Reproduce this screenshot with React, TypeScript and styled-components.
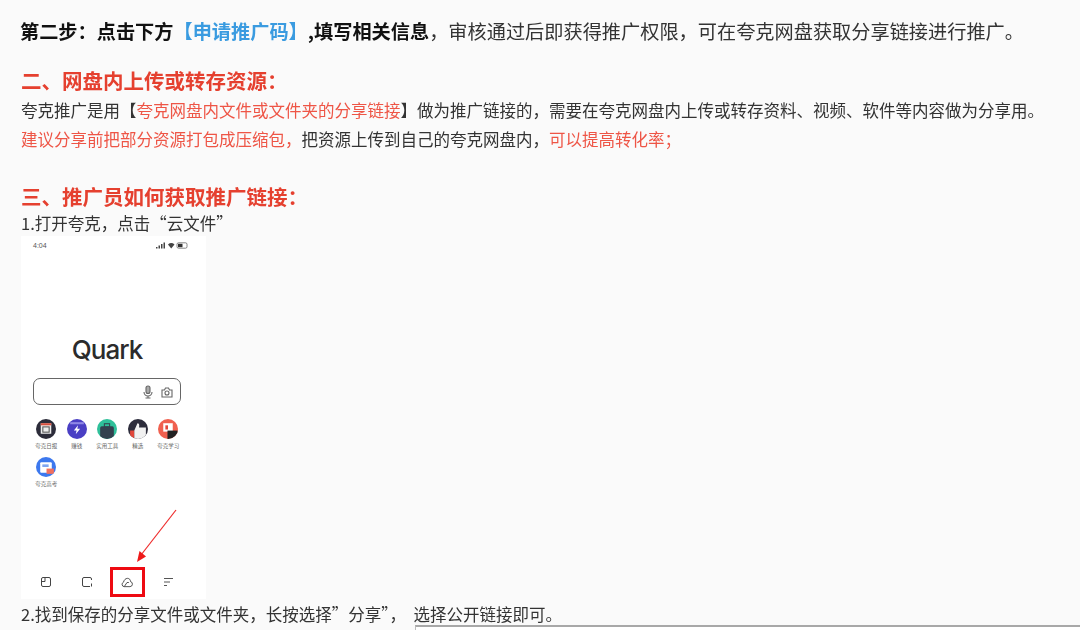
import React from "react";
import styled, { createGlobalStyle } from "styled-components";

const GlobalStyle = createGlobalStyle`
  html, body {
    margin: 0;
    height: 100%;
    overflow: hidden;
    background: #fafafa;
  }
  body {
    font-family: "Noto Sans CJK SC", "Liberation Sans", sans-serif;
  }
`;

const Page = styled.div`
  padding: 16px 0 0 21px;
  color: #333;
  filter: blur(0.25px);
`;

const Lead = styled.p`
  margin: 0 0 19px -1px;
  font-size: 19.2px;
  line-height: 30px;
  white-space: nowrap;
`;

const Strong = styled.b`
  font-weight: 700;
  color: #111;
`;

const Blue = styled.b`
  font-weight: 700;
  color: #3a9be0;
`;

const Heading = styled.h2<{ $top?: number; $lh: number }>`
  margin: ${(p) => p.$top ?? 0}px 0 0;
  font-size: 20.5px;
  line-height: ${(p) => p.$lh}px;
  font-weight: 700;
  color: #e5402f;
  white-space: nowrap;
`;

const Body = styled.p`
  margin: 0;
  font-size: 16.5px;
  line-height: 29px;
  white-space: nowrap;
`;

const Red = styled.span`
  color: #ee5546;
`;

const Step = styled.p`
  margin: 0;
  font-size: 16.5px;
  line-height: 24px;
  white-space: pre;
`;

const Phone = styled.div`
  position: relative;
  margin: 1px 0 3px;
  width: 185px;
  height: 363px;
  box-sizing: border-box;
  padding: 5px 25px 0 12px;
  background: #fff;
  display: flex;
  flex-direction: column;
`;

const StatusBar = styled.div`
  display: flex;
  align-items: center;
  justify-content: space-between;
  height: 9px;
  margin-right: -7px;
  font: 7px "Liberation Sans", sans-serif;
  color: #555;
`;

const Logo = styled.div`
  margin-top: 83px;
  text-align: center;
  font: 500 26px/34px "Inter", "Liberation Sans", sans-serif;
  letter-spacing: -1px;
  color: #2b2b2b;
`;

const SearchBox = styled.div`
  margin-top: 11px;
  height: 27px;
  box-sizing: border-box;
  border: 1px solid #666;
  border-radius: 7px;
  display: flex;
  align-items: center;
  justify-content: flex-end;
  gap: 7px;
  padding-right: 7px;
`;

const AppGrid = styled.div`
  margin: 14px 0 0 -2px;
  display: grid;
  grid-template-columns: repeat(5, 30.5px);
  row-gap: 7px;
`;

const AppItem = styled.div`
  display: flex;
  flex-direction: column;
  align-items: center;
`;

const AppIcon = styled.div<{ $bg: string }>`
  width: 20px;
  height: 20px;
  border-radius: 50%;
  background: ${(p) => p.$bg};
  overflow: hidden;
  display: flex;
  align-items: center;
  justify-content: center;
`;

const AppLabel = styled.span`
  margin-top: 3px;
  font-size: 5.5px;
  line-height: 8px;
  color: #666;
  white-space: nowrap;
`;

const NavBar = styled.div`
  margin: auto 7px 0;
  height: 34px;
  display: flex;
  align-items: center;
  justify-content: space-between;
`;

const NavSlot = styled.div`
  width: 12px;
  height: 12px;
  display: flex;
  align-items: center;
  justify-content: center;
`;

const Highlight = styled.div`
  position: absolute;
  left: 89px;
  top: 331px;
  width: 35px;
  height: 30px;
  box-sizing: border-box;
  border: 3px solid #ee0a12;
`;

const Arrow = styled.svg`
  position: absolute;
  left: 105px;
  top: 273px;
`;

const NextImage = styled.div`
  margin: -1px 0 0 394px;
  height: 20px;
  border-top: 2px solid #a8a8a8;
  border-left: 1px solid #bbb;
  background: #fff;
`;

const apps = [
  {
    label: "夸克日报",
    bg: "#2c2c3a",
    art: (
      <svg width="20" height="20" viewBox="0 0 19 19">
        <rect x="4.500" y="4" width="10" height="10" fill="#eee" />
        <rect x="4.500" y="4" width="10" height="2" fill="#d8503f" />
        <rect x="6.500" y="7.500" width="6" height="5" fill="none" stroke="#555" />
      </svg>
    ),
  },
  {
    label: "赚钱",
    bg: "#4a3fc4",
    art: (
      <svg width="20" height="20" viewBox="0 0 19 19">
        <rect x="3" y="3" width="13" height="2" fill="#8f88e6" />
        <path d="M10.500 6 6.500 11h2.600l-.8 3.500 4.200-5.200H9.800z" fill="#fff" />
      </svg>
    ),
  },
  {
    label: "实用工具",
    bg: "#2fc09a",
    art: (
      <svg width="20" height="20" viewBox="0 0 19 19">
        <rect x="3" y="7" width="13" height="12" rx="1.500" fill="#33414f" />
        <rect x="7" y="4.500" width="5" height="3" fill="none" stroke="#33414f" />
      </svg>
    ),
  },
  {
    label: "精选",
    bg: "#2d2d3c",
    art: (
      <svg width="20" height="20" viewBox="0 0 19 19">
        <path d="M2 11h4v8H2z" fill="#e2473b" />
        <path d="M6 11l3-7c1.500 0 2 1 1.500 4H17v7l-2 4H6z" fill="#f1f1f1" />
      </svg>
    ),
  },
  {
    label: "夸克学习",
    bg: "#f0604f",
    art: (
      <svg width="20" height="20" viewBox="0 0 19 19">
        <rect x="5" y="4" width="9" height="8" fill="#fff" />
        <rect x="9" y="11" width="10" height="8" fill="#222" />
        <rect x="7" y="6" width="2.500" height="4" fill="#e2473b" />
      </svg>
    ),
  },
  {
    label: "夸克高考",
    bg: "#3c78ee",
    art: (
      <svg width="20" height="20" viewBox="0 0 19 19">
        <rect x="4" y="5" width="11" height="10" rx="1" fill="#fff" />
        <rect x="6" y="7" width="6" height="2.500" fill="#7fa6f0" />
        <rect x="10" y="11" width="7" height="5" fill="#f0705f" />
      </svg>
    ),
  },
];

const App: React.FC = () => {
  return (
    <>
      <GlobalStyle />
      <Page>
        <Lead>
          <Strong>第二步：点击下方</Strong>
          <Blue>【申请推广码】</Blue>
          <Strong>,填写相关信息</Strong>，审核通过后即获得推广权限，可在夸克网盘获取分享链接进行推广。
        </Lead>

        <Heading $lh={31}>二、网盘内上传或转存资源：</Heading>
        <Body>
          夸克推广是用【<Red>夸克网盘内文件或文件夹的分享链接</Red>】做为推广链接的，需要在夸克网盘内上传或转存资料、视频、软件等内容做为分享用。
        </Body>
        <Body>
          <Red>建议分享前把部分资源打包成压缩包，</Red>把资源上传到自己的夸克网盘内，<Red>可以提高转化率；</Red>
        </Body>

        <Heading $top={28} $lh={29}>三、推广员如何获取推广链接：</Heading>
        <Step>1.打开夸克，点击“云文件”</Step>

        <Phone>
          <StatusBar>
            <span>4:04</span>
            <svg width="32" height="7" viewBox="0 0 32 7">
              <path d="M0 5h1.500v1.500H0zM2.500 3.500H4v3H2.500zM5 2h1.500v4.500H5zM7.500.5H9v6H7.500z" fill="#444" />
              <path d="M12 2.500a5 5 0 0 1 6.500 0L15.200 6.500z" fill="#444" />
              <rect x="21" y=".8" width="10" height="5.400" rx="1.500" fill="none" stroke="#555" strokeWidth=".7" />
              <rect x="22" y="1.800" width="4.500" height="3.400" fill="#333" />
            </svg>
          </StatusBar>

          <Logo>Quark</Logo>

          <SearchBox>
            <svg width="12" height="14" viewBox="0 0 12 14" fill="none" stroke="#666" strokeWidth="1.100">
              <rect x="4" y="1" width="4" height="7.500" rx="2" fill="#aaa" />
              <path d="M2 7a4 4 0 0 0 8 0M6 11v2M3.500 13h5" />
            </svg>
            <svg width="12" height="12" viewBox="0 0 12 12" fill="none" stroke="#666" strokeWidth="1.100">
              <path d="M1 4h2.500L4.500 2h3l1 2H11v7H1z" />
              <circle cx="6" cy="7" r="2" />
            </svg>
          </SearchBox>

          <AppGrid>
            {apps.map((app) => (
              <AppItem key={app.label}>
                <AppIcon $bg={app.bg}>{app.art}</AppIcon>
                <AppLabel>{app.label}</AppLabel>
              </AppItem>
            ))}
          </AppGrid>

          <NavBar>
            <NavSlot>
              <svg width="12" height="12" viewBox="0 0 12 12" fill="none" stroke="#444">
                <rect x="1.500" y="1.500" width="9" height="9" rx="1.500" />
                <path d="M5 1.500v4H2" />
              </svg>
            </NavSlot>
            <NavSlot>
              <svg width="12" height="12" viewBox="0 0 12 12" fill="none" stroke="#444">
                <path d="M10.500 4V3a1.500 1.500 0 0 0-1.500-1.500H3A1.500 1.500 0 0 0 1.500 3v6A1.500 1.500 0 0 0 3 10.500h6M10.500 7.500v3" />
              </svg>
            </NavSlot>
            <NavSlot>
              <svg width="13" height="11" viewBox="0 0 13 11" fill="none" stroke="#444">
                <path d="M3.500 10a2.500 2.500 0 0 1-.8-4.800C3.200 2.800 5 1 7 1c2 0 3.300 1.500 3.300 3.500A2.800 2.800 0 0 1 9.700 10zM3.500 10l3-4.500h2" />
              </svg>
            </NavSlot>
            <NavSlot>
              <svg width="12" height="12" viewBox="0 0 12 12" stroke="#555">
                <path d="M2 2.500h9M2 6h6M2 9.500h3" />
              </svg>
            </NavSlot>
          </NavBar>

          <Arrow width="52" height="60" viewBox="0 0 52 60">
            <path d="M50 1 15 46" stroke="#ee2a2a" strokeWidth="1.200" fill="none" />
            <path d="M11 53 13.500 42 20 47.500z" fill="#ee1a1a" />
          </Arrow>
          <Highlight />
        </Phone>

        <Step>2.找到保存的分享文件或文件夹，长按选择”分享”，  选择公开链接即可。</Step>
        <NextImage />
      </Page>
    </>
  );
};

export default App;
